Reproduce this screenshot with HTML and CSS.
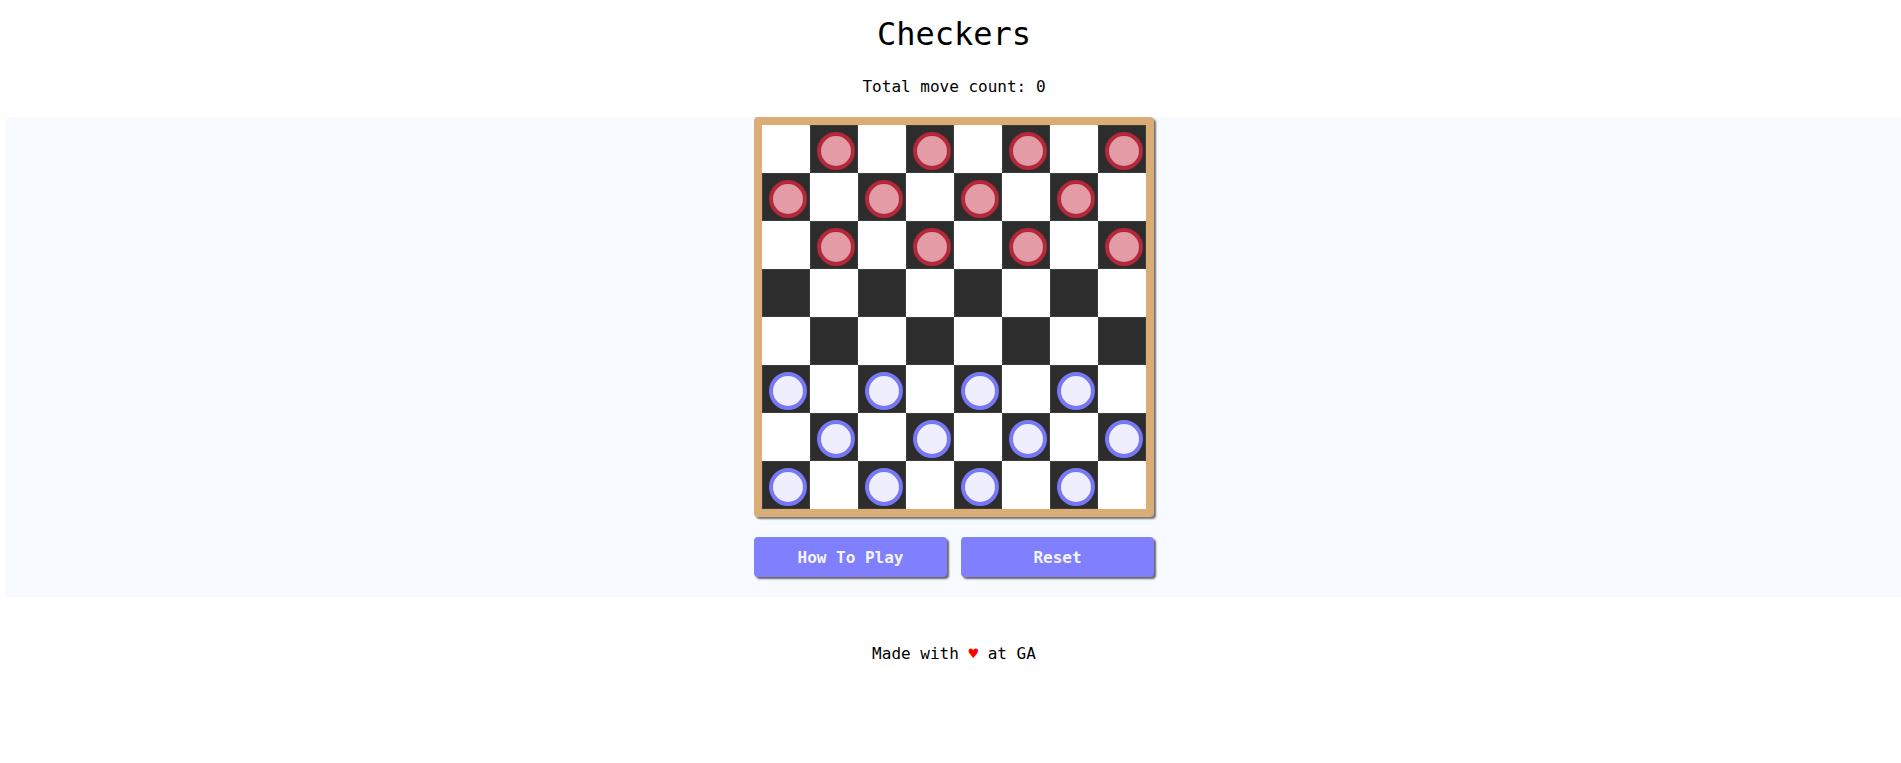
FILE: index.html
```html
<!DOCTYPE html>
<html lang="en">
<head>
    <meta charset="UTF-8">
    <meta name="viewport" content="width=device-width, initial-scale=1.0">
    <title>Checkers</title>
    <link rel="stylesheet" href="styles.css">
</head>
<body>
    <h1 class="title">Checkers</h1>
    <p class="count">Total move count: <span id="moves">0</span></p>
    <main class="game">
        <div class="board" id="board"></div>
        <div class="controls">
            <button class="btn" id="help">How To Play</button>
            <button class="btn" id="reset">Reset</button>
        </div>
    </main>
    <footer class="footer">Made with <span class="heart">&#9829;</span> at GA</footer>
    <script>
        let board = document.querySelector('#board');

        function render() {
            board.innerHTML = '';
            for (let r = 0; r < 8; r++) {
                for (let c = 0; c < 8; c++) {
                    let cell = document.createElement('div');
                    cell.className = 'cell';
                    if ((r + c) % 2 === 1) {
                        cell.classList.add('dark');
                        // 前三行红子，后三行蓝子
                        if (r < 3 || r > 4) {
                            let piece = document.createElement('div');
                            piece.className = r < 3 ? 'piece red' : 'piece blue';
                            cell.appendChild(piece);
                        }
                    }
                    board.appendChild(cell);
                }
            }
        }
        render();

        document.querySelector('#reset').addEventListener('click', () => {
            document.querySelector('#moves').textContent = 0;
            render();
        });
    </script>
</body>
</html>
```

FILE: styles.css
```css
*{
    box-sizing: border-box;
}
body{
    margin: 0 0 0 5px;
    padding-left: 2px;
    font-family: 'DejaVu Sans Mono', 'Liberation Mono', monospace;
    color: #000;
    background-color: #fff;
}
.title{
    margin: 16px 0 0;
    font-size: 32px;
    font-weight: normal;
    line-height: 37px;
    text-align: center;
}
.count{
    margin: 24px 0 21px;
    font-size: 16px;
    line-height: 19px;
    text-align: center;
}
.game{
    display: flex;
    flex-direction: column;
    align-items: center;

    margin-left: -2px;
    padding: 0 0 20px 2px;
    background-color: #f7faff;
}
.board{
    display: grid;
    grid-template-columns: repeat(8, 48px);
    grid-template-rows: repeat(8, 48px);

    width: 400px;
    height: 400px;
    border: 8px solid #d9ad75;
    border-radius: 4px;
    background-color: #fff;
    box-shadow: 2px 2px 2px rgba(0, 0, 0, 0.55);
}
.cell{
    width: 48px;
    height: 48px;
    background-color: #fff;
}
.dark{
    padding: 6px;
    border: 1px solid #3d3d3d;
    background-color: #2d2d2d;
}
.piece{
    width: 38px;
    height: 38px;
    border-radius: 50%;
    border: 4px solid;
}
.red{
    border-color: #b4283b;
    background-color: #e39ba6;
}
.blue{
    border-color: #7878f6;
    background-color: #eeeefd;
}
.controls{
    display: flex;
    justify-content: space-between;

    width: 400px;
    margin-top: 20px;
}
.btn{
    width: 193px;
    height: 40px;
    border: none;
    border-radius: 4px;
    color: #f4f4ff;
    background-color: #8080fe;
    font-family: 'DejaVu Sans Mono', 'Liberation Mono', monospace;
    font-size: 16px;
    font-weight: bold;
    box-shadow: 2px 2px 2px rgba(0, 0, 0, 0.6);
    cursor: pointer;
}
.footer{
    margin-top: 47px;
    font-size: 16px;
    line-height: 19px;
    text-align: center;
}
.heart{
    color: #f00;
}
```
